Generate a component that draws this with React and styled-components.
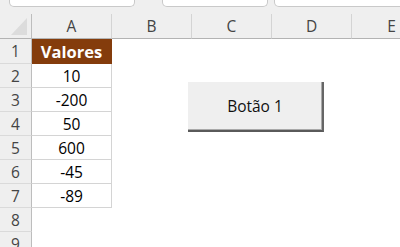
import React from 'react';
import styled, { createGlobalStyle } from 'styled-components';

const GlobalStyle = createGlobalStyle`
    html, body {
        margin: 0;
        padding: 0;
        background: #ffffff;
        overflow: hidden;
    }
    body {
        font-family: "Open Sans", "Liberation Sans", sans-serif;
    }
`;

const Page = styled.div`
    position: relative;
    width: 400px;
    height: 247px;
    overflow: hidden;
    background: #ffffff;
`;

const TopBar = styled.div`
    display: flex;
    height: 14px;
    padding-left: 9px;
    background: #efefef;
`;

const BarBox = styled.div`
    flex: 0 0 ${(p) => p.$w}px;
    margin-left: ${(p) => p.$gap || 0}px;
    height: 6px;
    background: #ffffff;
    border: 1px solid #c9c9c9;
    border-top: none;
    border-radius: 0 0 5px 5px;
`;

const Sheet = styled.div`
    display: grid;
    grid-template-columns: 32px repeat(5, 80px);
    grid-template-rows: 25px 25px repeat(8, 24px);
`;

const Corner = styled.div`
    display: flex;
    align-items: flex-end;
    justify-content: flex-end;
    padding: 0 4px 3px 0;
    background: #efefef;
    border-right: 1px solid #bdbdbd;
    border-bottom: 1px solid #b3b3b3;
`;

const CornerTriangle = styled.div`
    width: 16px;
    height: 17px;
    background: #dcdcdc;
    clip-path: polygon(100% 0, 100% 100%, 0 100%);
`;

const ColHead = styled.div`
    display: flex;
    align-items: center;
    justify-content: center;
    background: #efefef;
    color: #444444;
    font-size: 15.5px;
    border-right: 1px solid #d4d4d4;
    border-bottom: 1px solid #b3b3b3;
`;

const RowHead = styled.div`
    display: flex;
    align-items: center;
    justify-content: center;
    background: #efefef;
    color: #444444;
    font-size: 15.5px;
    border-right: 1px solid #bdbdbd;
    border-bottom: 1px solid #dadada;
`;

const Cell = styled.div`
    display: flex;
    align-items: center;
    justify-content: center;
    font-size: 15.5px;
    color: #000000;
    background: ${(p) => (p.$head ? '#843c0c' : '#ffffff')};
    font-weight: ${(p) => (p.$head ? 700 : 400)};
    ${(p) => p.$head && 'color: #ffffff; font-size: 16.5px;'}
    border-right: 1px solid ${(p) => (p.$head ? '#843c0c' : p.$grid ? '#d4d4d4' : '#ffffff')};
    border-bottom: 1px solid ${(p) => (p.$head ? '#843c0c' : p.$grid ? '#d4d4d4' : '#ffffff')};
`;

const Button = styled.div`
    position: absolute;
    left: 188px;
    top: 82px;
    width: 136px;
    height: 50px;
    box-sizing: border-box;
    display: flex;
    align-items: center;
    justify-content: center;
    background: #efefef;
    border-right: 2px solid #666666;
    border-bottom: 2px solid #5a5a5a;
    box-shadow: inset -1px -1px 0 #a9a9a9;
    font-size: 15.5px;
    color: #111111;
    padding-bottom: 1px;
`;

const columns = ['A', 'B', 'C', 'D', 'E'];
const values = ['10', '-200', '50', '600', '-45', '-89'];

export default function App() {
    const rows = [];
    for (let r = 1; r <= 9; r++) {
        rows.push(<RowHead key={'h' + r}>{r}</RowHead>);
        columns.forEach((c, i) => {
            if (i === 0 && r === 1) {
                rows.push(<Cell key={c + r} $head>Valores</Cell>);
            } else if (i === 0 && r <= 7) {
                rows.push(<Cell key={c + r} $grid>{values[r - 2]}</Cell>);
            } else {
                rows.push(<Cell key={c + r} />);
            }
        });
    }

    return (
        <Page>
            <GlobalStyle />
            <TopBar>
                <BarBox $w={124} />
                <BarBox $w={104} $gap={27} />
                <BarBox $w={140} $gap={6} />
            </TopBar>
            <Sheet>
                <Corner><CornerTriangle /></Corner>
                {columns.map((c) => <ColHead key={c}>{c}</ColHead>)}
                {rows}
            </Sheet>
            <Button>Botão 1</Button>
        </Page>
    );
}
